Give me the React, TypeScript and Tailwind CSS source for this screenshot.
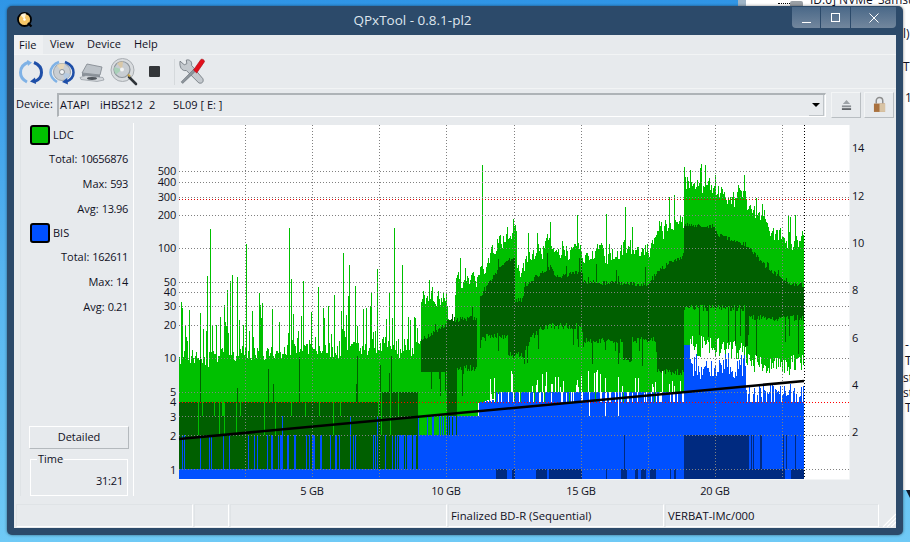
import React from "react";

const L = 179, R = 804;
type A = [number, number][];
function lerp(a: A, x: number) {
  if (x <= a[0][0]) return a[0][1];
  for (let i = 1; i < a.length; i++) {
    if (x <= a[i][0]) {
      const [x0, y0] = a[i - 1];
      const [x1, y1] = a[i];
      return y0 + ((y1 - y0) * (x - x0)) / (x1 - x0 || 1);
    }
  }
  return a[a.length - 1][1];
}
function rng(seed: number) {
  let s = seed;
  return () => {
    s = (s * 1664525 + 1013904223) >>> 0;
    return s / 4294967296;
  };
}
const tA: A = [[179,354],[420,347],[421,296],[446,300],[449,325],[455,325],[456,278],[476,280],[482,266],[495,250],[505,235],[516,230],[517,268],[524,268],[530,250],[545,248],[565,248],[582,254],[600,254],[625,248],[640,251],[650,244],[660,226],[670,229],[683,220],[684,182],[700,186],[715,193],[730,194],[745,198],[747,213],[760,219],[772,229],[785,238],[795,241],[804,243]];
const dA: A = [[179,402],[380,402],[381,392],[420,392],[421,340],[446,325],[447,320],[476,318],[477,402],[479,402],[480,295],[495,275],[505,262],[514,258],[515,300],[523,300],[524,285],[530,283],[537,275],[550,267],[556,277],[582,272],[583,282],[647,284],[663,267],[683,255],[684,224],[713,227],[718,235],[747,245],[767,269],[780,277],[787,283],[804,285]];
const d2A: A = [[179,469],[417,469],[418,372],[446,372],[447,435],[456,435],[457,368],[477,368],[478,352],[482,338],[507,335],[508,355],[524,355],[530,338],[546,326],[582,326],[583,340],[622,340],[623,360],[631,360],[632,340],[656,340],[657,372],[683,372],[684,308],[744,308],[745,345],[747,345],[748,318],[804,318]];
const gA: A = [[179,469],[477,469],[478,403],[495,398],[500,392],[683,392],[684,345],[745,352],[750,362],[804,366]];
const bA: A = [[179,469],[417,469],[418,435],[456,435],[457,416],[478,416],[479,402],[495,400],[496,392],[683,392],[684,345],[689,345],[690,366],[745,366],[746,392],[804,395]];
const spikes: Record<number, number> = {181:302,189:310,200:313,207:276,210:229,227:290,230:281,232:275,237:277,246:244,252:311,259:293,262:303,289:228,291:279,303:281,318:287,328:306,334:295,341:311,343:253,348:296,349:265,355:286,370:306,371:293,377:269,389:293,394:228,402:265,410:320,482:165,507:227,513:219,606:214,625:207,669:197,684:167,690:170,701:164,788:215,795:215};
const navyLow: [number, number][] = [[496,507],[512,515],[536,547],[549,582],[606,607],[621,627],[635,638],[641,646],[650,656],[670,671],[674,676],[684,785],[791,804]];
const navyMid: [number, number][] = [[624,625],[684,749],[751,752],[753,754],[760,762],[783,784],[786,787],[795,796]];
const inR = (x: number, r: [number, number][]) => r.some(([a, b]) => x >= a && x < b);

function buildChart() {
  const r = rng(4242);
  let light = "", dark = "", blue = "", navy = "";
  const col = (x: number, y1: number, y2: number) => (y2 > y1 ? `M${x} ${Math.round(y1)}h1V${Math.round(y2)}h-1Z` : "");
  let walk = 0;
  for (let x = L; x < R; x++) {
    const n = r() - 0.5;
    walk = walk * 0.55 + n * 16;
    let t = lerp(tA, x) + walk * (x < 420 ? 0.9 : 1) + (r() - 0.5) * 6;
    if (x < 420 && r() < 0.24) t = 305 + r() * 42;
    if (x < 420 && r() < 0.1) t = 350 + r() * 12;
    if (x > 420 && x < 684 && r() < 0.07) t -= 12 + r() * 18;
    if (x > 684 && r() < 0.1) t -= 8 + r() * 14;
    if (spikes[x]) t = spikes[x];
    let d1 = lerp(dA, x) + (x > 420 ? (r() - 0.5) * 5 : 0);
    let d2 = lerp(d2A, x) + (x > 457 ? (r() - 0.5) * 7 : 0);
    if (x < 417) {
      const q = r();
      if (q < 0.05) d1 = 416;
      else if (q < 0.09 && x > 195) d1 = 435;
      else if (q < 0.14) d1 = 355 + r() * 35;
    }
    if (x > 420 && x < 684 && r() < 0.09) d2 += 6 + r() * 20;
    if (x > 684 && x < 804 && r() < 0.07) d2 += 10 + r() * 30;
    if (x > 420 && r() < 0.05) d1 -= r() * 18;
    let g = lerp(gA, x);
    let b = lerp(bA, x);
    if (x >= 478 && x < 684) {
      const cluster = x >= 537 && x < 582 ? 0.5 : x >= 650 ? 0.35 : 0.14;
      if (r() < cluster) g -= 4 + r() * 18;
    } else if (x >= 684) {
      g += (r() - 0.5) * 22;
    }
    if (x < 417) {
      const q = r();
      if (q < (x > 395 ? 0.65 : 0.2)) b = 435;
      else if (q < 0.215 && x > 205) b = 416;
    } else if (x < 457 && r() < 0.3) {
      b = 416;
    }
    if (x >= 479 && x < 684) {
      const q = r();
      if (q < 0.28) b = 402;
      else if (q < 0.31) b = 416;
      if (r() < 0.1) g = b;
    }
    if (x >= 690 && x < 745) b += (r() - 0.5) * 26;
    if (x >= 746) {
      const q = r();
      b = q < 0.35 ? 402 : q < 0.7 ? 390 + r() * 8 : 384 + r() * 8;
    }
    if (x >= 457) g = Math.min(g, b);
    light += col(x, t, g);
    dark += col(x, d1, Math.max(d1, d2));
    blue += col(x, b, 479);
    if (inR(x, navyLow)) navy += col(x, 469, 479);
    if (inR(x, navyMid)) navy += col(x, 435, 469);
  }
  return { light, dark, blue, navy };
}
const chart = buildChart();

const hLines = [171.5, 182.5, 197.5, 215.5, 248.5, 282.5, 292.5, 306.5, 325.5, 358.5, 392.5, 416.5, 435.5, 469.5];
const vLines = [245.5, 312.5, 379.5, 446.5, 514.5, 581.5, 648.5, 715.5, 782.5];
const leftLabels: [string, number][] = [["500",175],["400",186],["300",201],["200",219],["100",252],["50",286],["40",296],["30",310],["20",329],["10",362],["5",396],["4",406],["3",421],["2",440],["1",474]];
const rightLabels: [string, number][] = [["14",152],["12",200],["10",247],["8",294],["6",342],["4",389],["2",436]];
const xLabels: [string, number][] = [["5 GB",312],["10 GB",446],["15 GB",581],["20 GB",715]];

function Chart() {
  return (
    <svg viewBox="134 120 762 380" className="w-[762px] h-[380px] shrink-0 block" fontFamily="'Open Sans', sans-serif" fontSize="11" fill="#101020">
      <rect x="179" y="125" width="670" height="354" fill="#ffffff" />
      <path d="M849.5 125V479.5H179" fill="none" stroke="#f3f5f6" />
      <g shapeRendering="crispEdges">
        <path d={chart.light} fill="#00c000" />
        <path d={chart.dark} fill="#005f00" />
        <path d={chart.blue} fill="#0050ff" />
        <path d={chart.navy} fill="#002a80" />
        {hLines.map((y) => (
          <line key={y} x1="179" x2="849" y1={y} y2={y} stroke="#808080" strokeDasharray="1 2" />
        ))}
        {vLines.map((x) => (
          <line key={x} x1={x} x2={x} y1="125" y2="479" stroke="#808080" strokeDasharray="1 2" />
        ))}
        <line x1="804.5" x2="804.5" y1="125" y2="479" stroke="#000000" strokeDasharray="1 2" />
        <line x1="179" x2="849" y1="199.5" y2="199.5" stroke="#e00000" strokeDasharray="1 2" />
        <line x1="179" x2="849" y1="402.5" y2="402.5" stroke="#ff0000" strokeDasharray="1 2" />
      </g>
      <line x1="179" y1="439" x2="804" y2="381" stroke="#000000" strokeWidth="2.6" />
      {leftLabels.map(([t, y]) => (
        <text key={t} x="176" y={y} textAnchor="end" letterSpacing="-0.2">{t}</text>
      ))}
      {rightLabels.map(([t, y]) => (
        <text key={t} x="852" y={y} letterSpacing="-0.2">{t}</text>
      ))}
      {xLabels.map(([t, x]) => (
        <text key={t} x={x} y="495" textAnchor="middle" letterSpacing="-0.2">{t}</text>
      ))}
    </svg>
  );
}

function RefreshIcon() {
  return (
    <svg viewBox="0 0 26 26" className="w-[26px] h-[26px]">
      <path d="M11 3C5 5 2.500 9 2.500 13.500S5 21 9 23" fill="none" stroke="#7fb2e6" strokeWidth="3" />
      <path d="M9 1l5 2.500-4 3.500z" fill="#7fb2e6" />
      <path d="M16 3.500c5 2 7.500 5.500 7.500 10s-2.500 7.500-7 9" fill="none" stroke="#1f4fa8" strokeWidth="3" />
      <path d="M18 25l-6-2.500 5-4z" fill="#1f4fa8" />
    </svg>
  );
}
function DiscRefreshIcon() {
  return (
    <svg viewBox="0 0 26 26" className="w-[26px] h-[26px]">
      <circle cx="13" cy="13" r="8.500" fill="#c9ced3" stroke="#9ba3aa" />
      <path d="M13 13L8 6.500A8.500 8.500 0 0 1 16 5z" fill="#e6d7ba" />
      <path d="M13 13L21 15A8.500 8.500 0 0 1 16 21z" fill="#b7cbe0" />
      <circle cx="13" cy="13" r="2.500" fill="#f3f5f6" stroke="#8c949b" />
      <path d="M10 3C5 4.500 1.500 9 1.500 13.500S5 21 8 23" fill="none" stroke="#7fb2e6" strokeWidth="2.500" />
      <path d="M16 3c5 2 8.500 5.500 8.500 10.500s-3 7.500-7 9" fill="none" stroke="#1f4fa8" strokeWidth="2.500" />
      <path d="M19 25.500l-6-2.500 5-4z" fill="#1f4fa8" />
    </svg>
  );
}
function DriveIcon() {
  return (
    <svg viewBox="0 0 26 26" className="w-[26px] h-[26px]">
      <path d="M3 14L8 5l15 3-2 8z" fill="#bcc2c8" stroke="#7d848b" strokeWidth="0.8" />
      <path d="M3 14l18 2v3L3 17z" fill="#8a9198" />
      <path d="M1 18.500l6-2 17 2 1 2.500-7 1.500-16-2z" fill="#d2d6da" stroke="#858c93" strokeWidth="0.6" />
      <ellipse cx="13" cy="19.500" rx="5" ry="1.400" fill="#50565c" />
    </svg>
  );
}
function MagnifierIcon() {
  return (
    <svg viewBox="0 0 28 28" className="w-[28px] h-[28px]">
      <circle cx="12.500" cy="12" r="11.500" fill="#d9dcdf" stroke="#a8adb2" />
      <circle cx="12" cy="11.500" r="8" fill="#c8cdd2" stroke="#8e959b" strokeWidth="1.200" />
      <path d="M12 11.500L7 5.500A8 8 0 0 1 13 3.500z" fill="#d9c8a8" />
      <path d="M12 11.500L4.500 9A8 8 0 0 0 6 16.500z" fill="#a8d0b8" />
      <circle cx="12" cy="11.500" r="2" fill="#f2f3f4" />
      <path d="M19 19l7 7" stroke="#2e3338" strokeWidth="2.600" strokeLinecap="round" />
      <path d="M18 16.500l2 2" stroke="#c6a24c" strokeWidth="2" />
    </svg>
  );
}
function ToolsIcon() {
  return (
    <svg viewBox="0 0 26 26" className="w-[27px] h-[27px]">
      <path d="M2 3l4 3.500 2.500-1L8 2c3-1 6 1.500 5 5L24 20c1 3-1 5-4 4L8 12C4 13 1 9 2 3z" fill="#c4c9ce" stroke="#6e757c" strokeWidth="0.8" />
      <path d="M15 11l-4 4-8 8 1.500 1.500 8-7.500 4-4z" fill="#8d959c" stroke="#5f666d" strokeWidth="0.5" />
      <path d="M15 11.500L22 1.500c1-1 3.500 0 3.500 2L18 14.500z" fill="#e3101c" stroke="#a80c14" strokeWidth="0.6" />
    </svg>
  );
}

function AppIcon() {
  return (
    <svg viewBox="0 0 16 16" className="w-[16px] h-[16px] shrink-0">
      <circle cx="7.500" cy="7.500" r="6.500" fill="#f6c768" stroke="#000000" strokeWidth="1.800" />
      <path d="M7.500 7.500L3.500 3A6 6 0 0 1 9 1.500z" fill="#fff4d6" />
      <circle cx="7.500" cy="7.500" r="1.300" fill="#ffffff" />
      <path d="M11 11l3.500 3.500" stroke="#000000" strokeWidth="2.200" />
    </svg>
  );
}

function StatRow({ label, value, h }: { label: string; value: string; h: string }) {
  return (
    <div className={`flex items-center justify-end pr-[5px] gap-[3px] ${h}`}>
      <span>{label}:</span>
      <span className="tracking-[-0.35px]">{value}</span>
    </div>
  );
}
function Legend({ name, color }: { name: string; color: string }) {
  return (
    <div className="flex items-center h-[24px] pl-[9px] gap-[3px]">
      <span className={`w-[20px] h-[20px] rounded-[3px] border-[2px] border-black ${color}`} />
      <span>{name}</span>
    </div>
  );
}

export default function App() {
  return (
    <div className="relative w-[910px] h-[542px] overflow-hidden bg-gradient-to-b from-[#2f95e6] via-[#56b4f0] to-[#6fcaf6] text-[#10101e] text-[11px] font-['Open_Sans',sans-serif]">
      <div className="absolute left-[738px] top-0 w-[8px] h-[6px] bg-[#9fb4c6]" />
      <div className="absolute left-[746px] top-0 w-[164px] h-[490px] bg-white text-[12px] leading-[16px]">
        <span className="absolute left-[32px] top-[3px] w-[12px] h-[1px] border-t border-dotted border-black" />
        <span className="absolute left-[44px] top-[1px] w-[13px] h-[5px] bg-[#9aa0a6] rounded-t-[2px]" />
        <span className="absolute left-[64px] top-[-8px] whitespace-nowrap">ID:0] NVMe</span>
        <span className="absolute left-[132px] top-[-8px] whitespace-nowrap">Samsu</span>
        <span className="absolute left-[157px] top-[26px]">l)</span>
        <span className="absolute left-[157px] top-[59px]">TE</span>
        <span className="absolute left-[159px] top-[90px]">1</span>
        <span className="absolute left-[159px] top-[337px]">-</span>
        <span className="absolute left-[159px] top-[353px]">T</span>
        <span className="absolute left-[157px] top-[370px]">st</span>
        <span className="absolute left-[157px] top-[385px]">st</span>
        <span className="absolute left-[159px] top-[400px]">T</span>
      </div>
      <div className="absolute left-[906px] top-[490px] w-0 h-0 border-x-[4px] border-x-transparent border-t-[8px] border-t-[#101828]" />

      <div className="absolute left-[7px] top-[6px] w-[896px] h-[529px] rounded-[5px] bg-[#2c4a6a] flex flex-col px-[7px] pb-[7px] shadow-[0_0_3px_rgba(0,0,0,0.5)]">
        <div className="h-[29px] shrink-0 flex items-start">
          <div className="pl-[3px] pt-[6px]"><AppIcon /></div>
          <div className="flex-1 text-center text-[13.5px] leading-[29px] text-[#dfe6ee]">QPxTool - 0.8.1-pl2</div>
          <div className="flex h-[21px] mt-[1px] rounded-b-[4px] overflow-hidden bg-gradient-to-b from-[#4a6888] to-[#72879d] text-white">
            <div className="w-[29px] flex items-end justify-center pb-[5px] border-r border-[#2c4a6a]"><span className="w-[9px] h-[1px] bg-white" /></div>
            <div className="w-[30px] flex items-center justify-center border-r border-[#2c4a6a]"><span className="w-[9px] h-[9px] border border-white" /></div>
            <div className="w-[45px] flex items-center justify-center">
              <svg viewBox="0 0 10 10" className="w-[10px] h-[10px]"><path d="M.5.5l9 9M9.500.5l-9 9" stroke="#ffffff" fill="none" /></svg>
            </div>
          </div>
        </div>

        <div className="flex-1 min-h-0 flex flex-col bg-[#e7eaed]">
          <div className="h-[20px] shrink-0 flex items-center border-b border-[#f2f4f5]">
            <span className="px-[5px] w-[29px] h-[19px] leading-[19px] bg-[#eef0f2]">File</span>
            <div className="flex gap-[13px] pl-[7px]">
              <span>View</span><span>Device</span><span>Help</span>
            </div>
          </div>

          <div className="h-[34px] shrink-0 flex items-center pl-[4px] border-b border-[#f2f4f5]">
            <div className="w-[31px]"><RefreshIcon /></div>
            <div className="w-[30px]"><DiscRefreshIcon /></div>
            <div className="w-[31px]"><DriveIcon /></div>
            <div className="w-[33px]"><MagnifierIcon /></div>
            <div className="w-[11px] h-[11px] ml-[6px] bg-[#333639] rounded-[1px]" />
            <div className="w-[1px] h-[26px] ml-[14px] bg-[#fafbfb] border-l border-[#d5d9dc]" />
            <div className="ml-[3px]"><ToolsIcon /></div>
          </div>

          <div className="h-[31px] shrink-0 flex items-center pl-[2px] gap-[2px]">
            <span className="w-[39px] whitespace-nowrap">Device:</span>
            <div className="w-[769px] h-[24px] flex items-center justify-between pl-[1px] border-t-2 border-l-2 border-[#aeb3b7] border-r border-b border-r-white border-b-white">
              <div className="flex whitespace-nowrap">
                <span className="w-[40px]">ATAPI</span>
                <span className="w-[49px]">iHBS212</span>
                <span className="w-[24px]">2</span>
                <span>5L09 [ E: ]</span>
              </div>
              <div className="w-[15px] h-[21px] mr-[1px] border-r border-b border-[#bfc4c8] flex items-center justify-center bg-[#e7eaed]">
                <span className="w-0 h-0 border-x-[4px] border-x-transparent border-t-[4px] border-t-black" />
              </div>
            </div>
            <div className="w-[30px] h-[26px] ml-[3px] flex items-center justify-center border border-[#f3f5f6] border-r-[#b9bec2] border-b-[#b9bec2]">
              <svg viewBox="0 0 12 12" className="w-[11px] h-[11px]"><path d="M6 1l4 4.500H2z" fill="#9da2a7" /><rect x="1" y="7" width="10" height="2" fill="#8a8f94" /><rect x="1" y="10" width="10" height="2" fill="#5f6368" /></svg>
            </div>
            <div className="w-[30px] h-[26px] ml-[1px] flex items-center justify-center border border-[#f3f5f6] border-r-[#b9bec2] border-b-[#b9bec2]">
              <svg viewBox="0 0 14 18" className="w-[13px] h-[17px]"><path d="M3.500 8V5a3.500 3.500 0 0 1 7 0v3" fill="none" stroke="#8e8e8e" strokeWidth="1.600" /><rect x="1" y="8" width="12" height="9" fill="#a9713f" /><rect x="7" y="8" width="6" height="9" fill="#d8c3a4" /></svg>
            </div>
          </div>

          <div className="flex-1 min-h-0 flex">
            <div className="w-[120px] shrink-0 pt-[3px]">
              <div className="w-[114px] h-[373px] ml-[6px] border-l border-[#dfe3e6] border-r border-r-white flex flex-col">
                <Legend name="LDC" color="bg-[#00c000]" />
                <StatRow label="Total" value="10656876" h="h-[25px]" />
                <StatRow label="Max" value="593" h="h-[25px]" />
                <StatRow label="Avg" value="13.96" h="h-[24px]" />
                <Legend name="BIS" color="bg-[#0050ff]" />
                <StatRow label="Total" value="162611" h="h-[25px]" />
                <StatRow label="Max" value="14" h="h-[25px]" />
                <StatRow label="Avg" value="0.21" h="h-[25px]" />
                <div className="mt-auto w-[100px] ml-[8px]">
                  <div className="h-[23px] flex items-center justify-center border border-white border-r-[#b4b9bd] border-b-[#b4b9bd]">Detailed</div>
                  <div className="relative mt-[10px] ml-[1px] w-[98px] h-[37px] border border-white flex items-end justify-end pr-[4px] pb-[6px]">
                    <span className="absolute left-[6px] -top-[8px] px-[1px] bg-[#e7eaed] leading-[14px]">Time</span>
                    <span className="tracking-[-0.2px]">31:21</span>
                  </div>
                </div>
              </div>
            </div>
            <Chart />
          </div>

          <div className="h-[23px] mb-[1px] shrink-0 flex items-stretch pl-[2px] gap-[1px]">
            {[
              { w: "w-[177px]", t: "" },
              { w: "w-[35px]", t: "" },
              { w: "w-[217px]", t: "" },
              { w: "w-[216px]", t: "Finalized BD-R (Sequential)" },
              { w: "w-[214px]", t: "VERBAT-IMc/000" },
            ].map((c, i) => (
              <div key={i} className={`${c.w} flex items-center pl-[2px] pt-[1px] border border-[#dfe3e6] border-r-white border-b-white text-[11.3px]`}>{c.t}</div>
            ))}
            <div className="flex-1 flex items-end justify-end">
              <svg viewBox="0 0 14 14" className="w-[14px] h-[14px]"><path d="M14 1L1 14M14 5L5 14M14 9L9 14" stroke="#ffffff" strokeWidth="1.200" /></svg>
            </div>
          </div>
        </div>
      </div>
    </div>
  );
}
